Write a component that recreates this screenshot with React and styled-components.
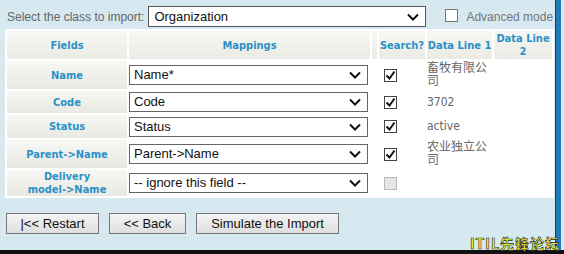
import React from "react";
import styled, { createGlobalStyle } from "styled-components";

const GlobalStyle = createGlobalStyle`
  html, body {
    margin: 0;
    padding: 0;
    background: #d6e8f0;
  }
  body {
    font-family: "DejaVu Sans Condensed", "DejaVu Sans", Tahoma, sans-serif;
    overflow: hidden;
  }
`;

const Screen = styled.div`
  position: relative;
  width: 564px;
  height: 254px;
  display: flex;
  flex-direction: column;
  background: #d6e8f0;
`;

const Main = styled.div`
  flex: 1;
  display: flex;
`;

const Frame = styled.div`
  width: 556px;
  border-right: 1px solid #2b3a44;
  box-shadow: 5px 0 0 #1f7cb6;
  padding: 6px 0 0 5px;
  box-sizing: border-box;
  display: flex;
  flex-direction: column;
`;

const BottomStrip = styled.div`
  height: 4px;
  background: #111;
`;

const TopBar = styled.div`
  display: flex;
  align-items: center;
  height: 21px;
  padding-left: 2px;
  white-space: nowrap;
`;

const Label = styled.span`
  flex-shrink: 0;
  color: #666;
  font-family: "Liberation Sans", Arial, sans-serif;
  font-size: 12px;
  margin-right: 4px;
`;

const ClassSelect = styled.div`
  flex-shrink: 0;
  width: 278px;
  height: 21px;
  box-sizing: border-box;
  border: 1px solid #555;
  background: #fff;
  display: flex;
  align-items: center;
  justify-content: space-between;
  padding: 0 6px 0 5px;
  font-family: "Liberation Sans", Arial, sans-serif;
  font-size: 13px;
  color: #111;
`;

const Advanced = styled.label`
  flex-shrink: 0;
  display: flex;
  align-items: center;
  margin-left: 19px;
  color: #777;
  font-family: "Liberation Sans", Arial, sans-serif;
  font-size: 12px;
`;

const EmptyBox = styled.span`
  width: 11px;
  height: 11px;
  border: 1px solid #777;
  background: #fff;
  margin-right: 8px;
  margin-top: -2px;
`;

const Panel = styled.div`
  margin-top: 2px;
  width: 549px;
  background: #fff;
`;

const Table = styled.table`
  border-collapse: separate;
  border-spacing: 2px;
  width: 100%;
  font-size: 11px;
  line-height: 13px;
`;

const Row = styled.tr`
  height: ${(p) => p.$h}px;
`;

const HeadCell = styled.th`
  width: ${(p) => p.$w}px;
  padding: 0;
  background: linear-gradient(#f7f7f3, #ebebe5);
  color: #2a90c8;
  font-size: 11px;
  font-weight: bold;
  text-align: center;
  vertical-align: middle;
`;

const FieldCell = styled.td`
  padding: 0;
  background: linear-gradient(#f7f7f3, #e9e9e3);
  color: #2a90c8;
  font-weight: bold;
  text-align: center;
  vertical-align: middle;
`;

const Cell = styled.td`
  padding: 0;
  vertical-align: middle;
`;

const MapSelect = styled.div`
  width: 239px;
  height: 20px;
  box-sizing: border-box;
  border: 1px solid #666;
  background: #fff;
  display: flex;
  align-items: center;
  justify-content: space-between;
  padding: 0 6px 0 4px;
  font-family: "Liberation Sans", Arial, sans-serif;
  font-size: 13px;
  line-height: 16px;
  color: #111;
`;

const CheckCell = styled.td`
  padding: 0 0 0 5px;
  vertical-align: middle;
`;

const Check = styled.span`
  display: flex;
  align-items: center;
  justify-content: center;
  width: 13px;
  height: 13px;
  box-sizing: border-box;
  border: 1px solid ${(p) => (p.$disabled ? "#bbb" : "#444")};
  background: ${(p) => (p.$disabled ? "#e6e6e6" : "#fff")};
`;

const DataCell = styled.td`
  padding: 0;
  vertical-align: middle;
  color: #666;
  font-size: 12px;
  font-family: "DejaVu Sans Condensed", "DejaVu Sans", "Noto Sans CJK SC", sans-serif;
  word-break: break-all;
`;

const Buttons = styled.div`
  display: flex;
  gap: 10px;
  margin-top: 15px;
  padding-left: 1px;
`;

const Button = styled.button`
  width: ${(p) => p.$w}px;
  height: 21px;
  padding: 0;
  border: 1px solid #777;
  background: linear-gradient(#f4f4f4, #dedede);
  font-family: "Liberation Sans", Arial, sans-serif;
  font-size: 13px;
  color: #111;
`;

const Watermark = styled.div`
  position: absolute;
  right: 4px;
  bottom: 3px;
  font-family: "Noto Sans CJK SC", sans-serif;
  font-size: 14px;
  line-height: 16px;
  font-weight: bold;
  color: #ffff33;
  letter-spacing: 1px;
  -webkit-text-stroke: 0.6px #222;
`;

const Chevron = () => (
  <svg width="12" height="8" viewBox="0 0 12 8">
    <path d="M1 1.5 L6 6.5 L11 1.5" fill="none" stroke="#111" strokeWidth="2" />
  </svg>
);

const Tick = () => (
  <svg width="11" height="11" viewBox="0 0 11 11">
    <path d="M1.5 5.5 L4.5 8.5 L9.5 1.5" fill="none" stroke="#111" strokeWidth="2" />
  </svg>
);

const rows = [
  { field: "Name", map: "Name*", checked: true, data: "畜牧有限公司", h: 28 },
  { field: "Code", map: "Code", checked: true, data: "3702", h: 22 },
  { field: "Status", map: "Status", checked: true, data: "active", h: 23 },
  { field: "Parent->Name", map: "Parent->Name", checked: true, data: "农业独立公司", h: 28 },
  { field: <>Delivery<br />model-&gt;Name</>, map: "-- ignore this field --", checked: false, data: "", h: 26 },
];

export default function App() {
  return (
    <Screen>
      <GlobalStyle />
      <Main>
        <Frame>
          <TopBar>
            <Label>Select the class to import:</Label>
            <ClassSelect>
              Organization
              <Chevron />
            </ClassSelect>
            <Advanced>
              <EmptyBox />
              Advanced mode
            </Advanced>
          </TopBar>
          <Panel>
            <Table>
              <thead>
                <Row $h={28}>
                  <HeadCell $w={120}>Fields</HeadCell>
                  <HeadCell $w={241}>Mappings</HeadCell>
                  <HeadCell $w={5}></HeadCell>
                  <HeadCell $w={46}>Search?</HeadCell>
                  <HeadCell $w={65}>Data Line 1</HeadCell>
                  <HeadCell $w={58}>Data Line<br />2</HeadCell>
                </Row>
              </thead>
              <tbody>
                {rows.map((r, i) => (
                  <Row key={i} $h={r.h}>
                    <FieldCell>{r.field}</FieldCell>
                    <Cell>
                      <MapSelect>
                        {r.map}
                        <Chevron />
                      </MapSelect>
                    </Cell>
                    <Cell />
                    <CheckCell>
                      <Check $disabled={!r.checked}>{r.checked && <Tick />}</Check>
                    </CheckCell>
                    <DataCell>{r.data}</DataCell>
                    <DataCell />
                  </Row>
                ))}
              </tbody>
            </Table>
          </Panel>
          <Buttons>
            <Button $w={93}>|&lt;&lt; Restart</Button>
            <Button $w={77}>&lt;&lt; Back</Button>
            <Button $w={143}>Simulate the Import</Button>
          </Buttons>
        </Frame>
      </Main>
      <BottomStrip />
      <Watermark>ITIL先锋论坛</Watermark>
    </Screen>
  );
}
